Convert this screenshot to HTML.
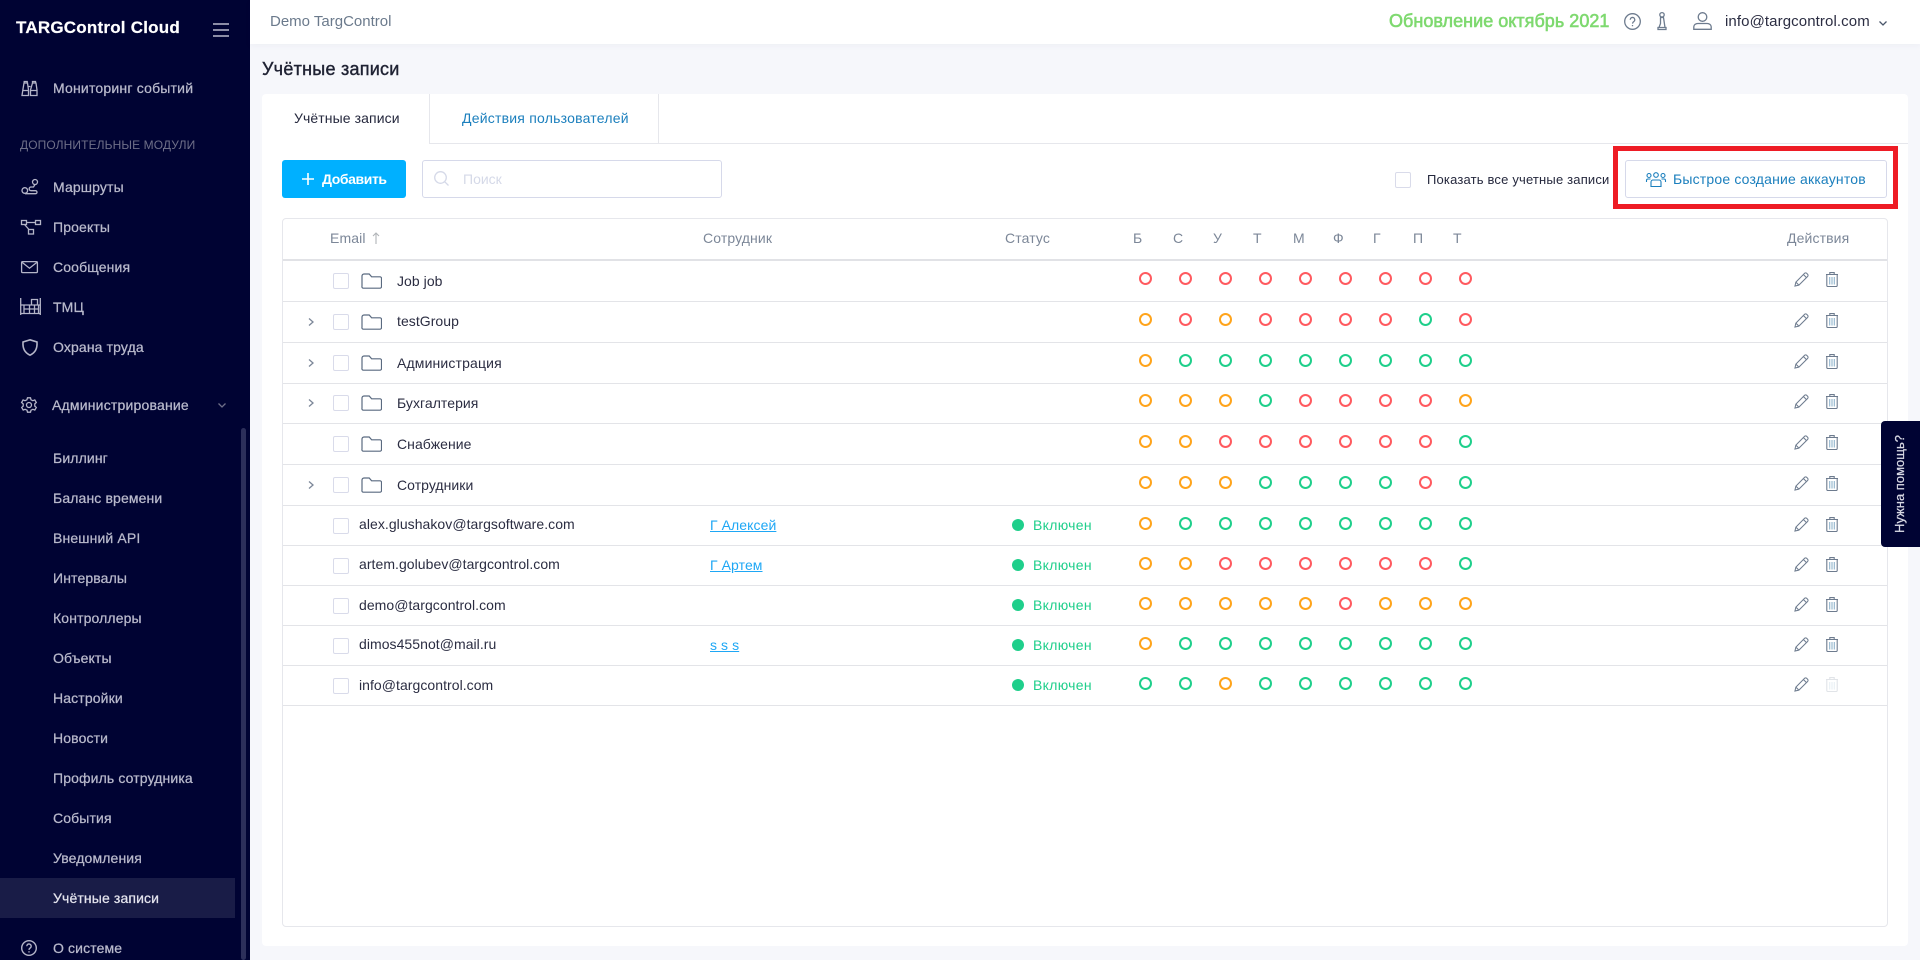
<!DOCTYPE html>
<html lang="ru"><head><meta charset="utf-8"><title>Учётные записи</title>
<style>
*{box-sizing:border-box}
html,body{margin:0;padding:0;width:1920px;height:960px;overflow:hidden;background:#f6f7fb;font-family:"Liberation Sans",sans-serif;font-size:14px;color:#25283d}
.a,.t,svg.i{position:absolute}
.t{white-space:nowrap;line-height:20px;height:20px}
#side{position:absolute;left:0;top:0;width:250px;height:960px;background:#000333;overflow:hidden}
#side .t{color:#b9bacc;left:53px;-webkit-text-stroke:.25px #b9bacc;letter-spacing:.13px}
svg.i{fill:none;stroke:#b4b5c8;stroke-width:1.3;overflow:visible}
#hdr{position:absolute;left:250px;top:0;width:1670px;height:44px;background:#fff;box-shadow:0 2px 6px rgba(40,50,90,.04)}
.card{position:absolute;left:262px;top:94px;width:1646px;height:852px;background:#fff;border-radius:4px}
.line{position:absolute;left:283px;width:1604px;height:1px;background:#e3e4e8}
.cb{position:absolute;left:333px;width:16px;height:16px;background:#fff;border:1px solid #d9dbea;border-radius:2px}
.h{color:#7c8798;letter-spacing:.12px}
.n{color:#2b2d42;letter-spacing:.05px}
.l{color:#1ea7f5;text-decoration:underline;letter-spacing:.08px}
.g{color:#1fcf8b;letter-spacing:.3px}
.dot{position:absolute;left:1012px;width:12px;height:12px;border-radius:50%;background:#1fcf8b}
circle.r,circle.o,circle.v{fill:none;stroke-width:2}
.r{stroke:#ff5a5f}.o{stroke:#ffa41b}.v{stroke:#1fcf8b}
</style></head><body>
<svg width="0" height="0" style="position:absolute"><defs>
<symbol id="fo" viewBox="0 0 21 16"><path d="M1 3a2 2 0 0 1 2-2h5.2l2.4 2.8H19a1.5 1.5 0 0 1 1.5 1.5v8.4a1.5 1.5 0 0 1-1.5 1.5H2.5A1.5 1.5 0 0 1 1 13.2z" fill="none" stroke="#5a6a80" stroke-width="1.2"/></symbol>
<symbol id="pe" viewBox="0 0 16 16"><path d="M1 15l1-4.2L11.200 1.500a1.700 1.700 0 0 1 2.400 0l.9.9a1.700 1.700 0 0 1 0 2.400L5.200 14z M2 10.800L5.200 14 M10 2.700l3.300 3.300" fill="none" stroke="#6d7b8e" stroke-width="1.100"/></symbol>
<symbol id="tr" viewBox="0 0 12 15"><path d="M0 2.500h12 M3.800 2.500V.6h4.400v1.900 M.8 2.500v11a1 1 0 0 0 1 1h8.400a1 1 0 0 0 1-1v-11" fill="none" stroke="#6d7b8e" stroke-width="1.100"/><path d="M3.700 5v7.500 M6 5v7.500 M8.300 5v7.500" fill="none" stroke="#8fb4cc" stroke-width="1.100"/></symbol>
<symbol id="chv" viewBox="0 0 8 10"><path d="M2 1.500L6 5 2 8.500" fill="none" stroke="#7c8798" stroke-width="1.300"/></symbol>
</defs></svg>

<div id="side">
<div class="t" style="left:16px;top:18px;color:#fff;font-weight:bold;font-size:17px;-webkit-text-stroke:.2px #fff;letter-spacing:.22px">TARGControl Cloud</div>
<svg class="i" style="left:213px;top:23px;stroke:#dfe0ea" width="16" height="14"><path d="M0 1h16M0 7h16M0 13h16"/></svg>

<svg class="i" style="left:21px;top:81px" width="17" height="15"><path d="M1 14.500h6.500V9L6.500 2H3L2 8zM9.500 14.500H16V9L15 2h-3.500l-2 7zM7.500 5.500h2M1.500 9.500h6M9.500 9.500h6.500M3.200 2V.5h3V2M11.500 2V.5h3V2"/></svg>
<div class="t" style="top:78px;letter-spacing:.2px">Мониторинг событий</div>
<div class="t" style="top:134.500px;font-size:12px;color:#6e6f88;-webkit-text-stroke:0;left:20px;letter-spacing:.1px">ДОПОЛНИТЕЛЬНЫЕ МОДУЛИ</div>

<svg class="i" style="left:21px;top:179px" width="17" height="16"><circle cx="3.800" cy="11.500" r="2.800"/><circle cx="14" cy="3" r="2.500"/><path d="M14 5.500l-1.500 2.500H10a1.800 1.800 0 0 0 0 3.700h4.500a1.500 1.500 0 0 1 0 3H4"/></svg>
<div class="t" style="top:177px">Маршруты</div>

<svg class="i" style="left:21px;top:220px" width="20" height="16"><rect x=".5" y=".5" width="5" height="4"/><rect x="14.500" y=".5" width="5" height="4"/><rect x="7.500" y="9.500" width="5" height="4.500"/><path d="M5.500 2.500H14.500M3.500 4.500L8 9.500"/></svg>
<div class="t" style="top:217px">Проекты</div>

<svg class="i" style="left:21px;top:261px" width="17" height="12"><rect x=".6" y=".6" width="15.800" height="11" rx="1"/><path d="M1 1.200l7.500 6 7.500-6"/></svg>
<div class="t" style="top:257px">Сообщения</div>

<svg class="i" style="left:20px;top:298px" width="21" height="17"><path d="M.7 0v17M20.300 0v17M.7 15.500h19.600M.7 7h19.600M4 7v8.500M9.500 7v8.500M14.500 7v8.500M18.500 7v8.500M11.500 7V1.500h6V7M4 11h14.500"/></svg>
<div class="t" style="top:297px">ТМЦ</div>

<svg class="i" style="left:22px;top:339px;stroke-width:1.600" width="16" height="17"><path d="M8 .8L15 3c.4 6.500-1.500 10.500-7 13.200C2.500 13.500.6 9.500 1 3z"/></svg>
<div class="t" style="top:337px">Охрана труда</div>

<svg class="i" style="left:21px;top:397px" width="16" height="16"><circle cx="8" cy="8" r="2.500"/><path d="M6.500 .8h3l.5 2 1.900.9 1.900-.8 1.500 2.600-1.500 1.400v2.200l1.500 1.400-1.500 2.600-1.900-.8-1.900.9-.5 2h-3l-.5-2-1.900-.9-1.900.8-1.500-2.600 1.500-1.400V6.900L.6 5.500l1.500-2.600 1.900.8 1.900-.9z"/></svg>
<div class="t" style="left:52px;top:395px;letter-spacing:.2px">Администрирование</div>
<svg class="i" style="left:218px;top:403px;stroke:#6e6f88" width="8" height="5"><path d="M.5.5L4 4 7.500.5"/></svg>

<div class="a" style="left:0;top:878px;width:235px;height:40px;background:#191c47"></div>
<div class="a" style="left:241px;top:428px;width:5px;height:532px;background:#2c2f5a;border-radius:3px"></div>
<div class="t" style="top:448px">Биллинг</div>
<div class="t" style="top:488px">Баланс времени</div>
<div class="t" style="top:528px">Внешний API</div>
<div class="t" style="top:568px">Интервалы</div>
<div class="t" style="top:608px">Контроллеры</div>
<div class="t" style="top:648px">Объекты</div>
<div class="t" style="top:688px">Настройки</div>
<div class="t" style="top:728px">Новости</div>
<div class="t" style="top:768px">Профиль сотрудника</div>
<div class="t" style="top:808px">События</div>
<div class="t" style="top:848px">Уведомления</div>
<div class="t" style="top:888px;color:#e4e4ee;-webkit-text-stroke:.25px #e4e4ee">Учётные записи</div>
<svg class="i" style="left:21px;top:940px;stroke-width:1.400" width="16" height="16"><circle cx="8" cy="8" r="7.300"/><path d="M5.800 6.200a2.200 2.200 0 1 1 3.400 1.800c-.8.500-1.200 1-1.200 1.900M8 11.300v1.200"/></svg>
<div class="t" style="top:938px">О системе</div>
</div>

<div id="hdr"></div>
<div class="t" style="left:270px;top:12px;color:#6b7a8c;font-size:15px">Demo TargControl</div>
<div class="t" style="left:1389px;top:11px;color:#7ed96f;font-size:18px;-webkit-text-stroke:.6px #7ed96f;letter-spacing:.03px">Обновление октябрь 2021</div>
<svg class="i" style="left:1624px;top:13px;stroke:#6d7b8e;stroke-width:1.300" width="17" height="17"><circle cx="8.500" cy="8.500" r="7.800"/><path d="M6.200 6.700a2.300 2.300 0 1 1 3.500 2c-.8.500-1.200 1-1.200 1.900M8.500 12v1.200"/></svg>
<svg class="i" style="left:1657px;top:12px;stroke:#6d7b8e;stroke-width:1.300" width="10" height="18"><circle cx="5" cy="2.800" r="2.200"/><path d="M3 5.500h4M3.500 5.500v6L2 15.500h6L6.500 5.500M1 17.500h8v-2H1z"/></svg>
<svg class="i" style="left:1693px;top:12px;stroke:#6d7b8e;stroke-width:1.300" width="19" height="18"><circle cx="9.500" cy="5" r="4.300"/><path d="M.8 17.300v-2.500c0-2 2-3.300 4-3.300h9.400c2 0 4 1.300 4 3.300v2.500z"/></svg>
<div class="t" style="left:1725px;top:12px;color:#2b2d42;font-size:15px;letter-spacing:.1px">info@targcontrol.com</div>
<svg class="i" style="left:1879px;top:21px;stroke:#4a566a" width="8" height="5"><path d="M.5.5L4 4 7.500.5"/></svg>

<div class="t" style="left:262px;top:59px;font-size:18px;color:#1f2233;-webkit-text-stroke:.4px #1f2233;letter-spacing:.25px">Учётные записи</div>

<div class="card"></div>
<div class="a" style="left:429px;top:94px;width:1px;height:50px;background:#e6e7ec"></div>
<div class="a" style="left:658px;top:94px;width:1px;height:50px;background:#e6e7ec"></div>
<div class="a" style="left:429px;top:143px;width:1479px;height:1px;background:#e6e7ec"></div>
<div class="t" style="left:294px;top:108px;color:#25283d;letter-spacing:.1px">Учётные записи</div>
<div class="t" style="left:462px;top:108px;color:#1b7fbd;letter-spacing:.22px">Действия пользователей</div>

<div class="a" style="left:282px;top:160px;width:124px;height:38px;background:#00b0ff;border-radius:3px"></div>
<svg class="i" style="left:302px;top:173px;stroke:#fff;stroke-width:1.600" width="12" height="12"><path d="M6 0v12M0 6h12"/></svg>
<div class="t" style="left:322px;top:169px;color:#fff;font-weight:bold;letter-spacing:-.4px">Добавить</div>

<div class="a" style="left:422px;top:160px;width:300px;height:38px;background:#fff;border:1px solid #d6d9ea;border-radius:3px"></div>
<svg class="i" style="left:434px;top:171px;stroke:#d5d9e8;stroke-width:1.300" width="15" height="15"><circle cx="6.500" cy="6.500" r="5.800"/><path d="M10.800 10.800L14.500 14.500"/></svg>
<div class="t" style="left:463px;top:169px;color:#d5d9e8">Поиск</div>

<div class="a" style="left:1395px;top:172px;width:16px;height:16px;background:#fff;border:1px solid #d9dbea;border-radius:2px"></div>
<div class="t" style="left:1427px;top:170px;font-size:13px;color:#25283d;letter-spacing:.18px">Показать все учетные записи</div>

<div class="a" style="left:1612.500px;top:146px;width:285px;height:63px;border:5px solid #ee1c25"></div>
<div class="a" style="left:1625px;top:160px;width:262px;height:38px;background:#fff;border:1px solid #d6d9ea;border-radius:3px"></div>
<svg class="i" style="left:1646px;top:172px;stroke:#1b7fbd;stroke-width:1.100" width="20" height="15"><circle cx="10" cy="3" r="2.300"/><circle cx="3" cy="3.500" r="2"/><circle cx="17" cy="3.500" r="2"/><path d="M5 14.500V10a2 2 0 0 1 2-2h6a2 2 0 0 1 2 2v4.500zM.5 10V8.500a1.500 1.500 0 0 1 1.500-1.500h2.500M19.500 10V8.500A1.500 1.500 0 0 0 18 7h-2.500"/></svg>
<div class="t" style="left:1673px;top:169px;color:#1b7fbd;letter-spacing:.18px">Быстрое создание аккаунтов</div>

<div class="a" style="left:282px;top:218px;width:1606px;height:709px;background:#fff;border:1px solid #e6e7ec;border-radius:4px"></div>
<div class="a" style="left:283px;top:259px;width:1604px;height:2px;background:#e1e2e6"></div>
<div class="line" style="top:301px"></div><div class="line" style="top:342px"></div><div class="line" style="top:383px"></div><div class="line" style="top:423px"></div><div class="line" style="top:464px"></div><div class="line" style="top:505px"></div><div class="line" style="top:545px"></div><div class="line" style="top:585px"></div><div class="line" style="top:625px"></div><div class="line" style="top:665px"></div><div class="line" style="top:705px"></div>

<div class="t h" style="left:330px;top:228px">Email</div>
<svg class="i" style="left:372px;top:232px;stroke:#b1b4b8;stroke-width:1.100" width="8" height="12"><path d="M4 12V1M1 4l3-3 3 3"/></svg>
<div class="t h" style="left:703px;top:228px">Сотрудник</div>
<div class="t h" style="left:1005px;top:228px">Статус</div>
<div class="t h" style="left:1133px;top:228px">Б</div><div class="t h" style="left:1173px;top:228px">С</div><div class="t h" style="left:1213px;top:228px">У</div><div class="t h" style="left:1253px;top:228px">Т</div><div class="t h" style="left:1293px;top:228px">М</div><div class="t h" style="left:1333px;top:228px">Ф</div><div class="t h" style="left:1373px;top:228px">Г</div><div class="t h" style="left:1413px;top:228px">П</div><div class="t h" style="left:1453px;top:228px">Т</div>
<div class="t h" style="left:1787px;top:228px">Действия</div>

<div class="cb" style="top:273px"></div><div class="cb" style="top:314px"></div><div class="cb" style="top:355px"></div><div class="cb" style="top:395px"></div><div class="cb" style="top:436px"></div><div class="cb" style="top:477px"></div><div class="cb" style="top:518px"></div><div class="cb" style="top:558px"></div><div class="cb" style="top:598px"></div><div class="cb" style="top:638px"></div><div class="cb" style="top:678px"></div>

<svg class="i" style="left:307px;top:317px" width="8" height="10"><use href="#chv"/></svg>
<svg class="i" style="left:307px;top:358px" width="8" height="10"><use href="#chv"/></svg>
<svg class="i" style="left:307px;top:398px" width="8" height="10"><use href="#chv"/></svg>
<svg class="i" style="left:307px;top:480px" width="8" height="10"><use href="#chv"/></svg>

<svg class="i" style="left:361px;top:273px" width="21" height="16"><use href="#fo"/></svg>
<svg class="i" style="left:361px;top:314px" width="21" height="16"><use href="#fo"/></svg>
<svg class="i" style="left:361px;top:355px" width="21" height="16"><use href="#fo"/></svg>
<svg class="i" style="left:361px;top:395px" width="21" height="16"><use href="#fo"/></svg>
<svg class="i" style="left:361px;top:436px" width="21" height="16"><use href="#fo"/></svg>
<svg class="i" style="left:361px;top:477px" width="21" height="16"><use href="#fo"/></svg>

<div class="t n" style="left:397px;top:271px">Job job</div>
<div class="t n" style="left:397px;top:311px">testGroup</div>
<div class="t n" style="left:397px;top:353px;letter-spacing:.15px">Администрация</div>
<div class="t n" style="left:397px;top:393px">Бухгалтерия</div>
<div class="t n" style="left:397px;top:434px">Снабжение</div>
<div class="t n" style="left:397px;top:475px">Сотрудники</div>
<div class="t n" style="left:359px;top:514px">alex.glushakov@targsoftware.com</div>
<div class="t n" style="left:359px;top:554px">artem.golubev@targcontrol.com</div>
<div class="t n" style="left:359px;top:595px">demo@targcontrol.com</div>
<div class="t n" style="left:359px;top:634px">dimos455not@mail.ru</div>
<div class="t n" style="left:359px;top:675px">info@targcontrol.com</div>

<div class="t l" style="left:710px;top:515px">Г Алексей</div>
<div class="t l" style="left:710px;top:555px">Г Артем</div>
<div class="t l" style="left:710px;top:635px">s s s</div>

<div class="dot" style="top:519px"></div><div class="t g" style="left:1033px;top:515px">Включен</div>
<div class="dot" style="top:559px"></div><div class="t g" style="left:1033px;top:555px">Включен</div>
<div class="dot" style="top:599px"></div><div class="t g" style="left:1033px;top:595px">Включен</div>
<div class="dot" style="top:639px"></div><div class="t g" style="left:1033px;top:635px">Включен</div>
<div class="dot" style="top:679px"></div><div class="t g" style="left:1033px;top:675px">Включен</div>

<svg class="a" style="left:0;top:0" width="1920" height="960" viewBox="0 0 1920 960">
<defs><style>circle.r,circle.o,circle.v{r:5.500px}</style></defs>
<g id="statuses">
<g transform="translate(0 278.500)"><circle class="r" cx="1145.500" cy="0"/><circle class="r" cx="1185.500" cy="0"/><circle class="r" cx="1225.500" cy="0"/><circle class="r" cx="1265.500" cy="0"/><circle class="r" cx="1305.500" cy="0"/><circle class="r" cx="1345.500" cy="0"/><circle class="r" cx="1385.500" cy="0"/><circle class="r" cx="1425.500" cy="0"/><circle class="r" cx="1465.500" cy="0"/></g>
<g transform="translate(0 319.500)"><circle class="o" cx="1145.500" cy="0"/><circle class="r" cx="1185.500" cy="0"/><circle class="o" cx="1225.500" cy="0"/><circle class="r" cx="1265.500" cy="0"/><circle class="r" cx="1305.500" cy="0"/><circle class="r" cx="1345.500" cy="0"/><circle class="r" cx="1385.500" cy="0"/><circle class="v" cx="1425.500" cy="0"/><circle class="r" cx="1465.500" cy="0"/></g>
<g transform="translate(0 360.500)"><circle class="o" cx="1145.500" cy="0"/><circle class="v" cx="1185.500" cy="0"/><circle class="v" cx="1225.500" cy="0"/><circle class="v" cx="1265.500" cy="0"/><circle class="v" cx="1305.500" cy="0"/><circle class="v" cx="1345.500" cy="0"/><circle class="v" cx="1385.500" cy="0"/><circle class="v" cx="1425.500" cy="0"/><circle class="v" cx="1465.500" cy="0"/></g>
<g transform="translate(0 400.500)"><circle class="o" cx="1145.500" cy="0"/><circle class="o" cx="1185.500" cy="0"/><circle class="o" cx="1225.500" cy="0"/><circle class="v" cx="1265.500" cy="0"/><circle class="r" cx="1305.500" cy="0"/><circle class="r" cx="1345.500" cy="0"/><circle class="r" cx="1385.500" cy="0"/><circle class="r" cx="1425.500" cy="0"/><circle class="o" cx="1465.500" cy="0"/></g>
<g transform="translate(0 441.500)"><circle class="o" cx="1145.500" cy="0"/><circle class="o" cx="1185.500" cy="0"/><circle class="r" cx="1225.500" cy="0"/><circle class="r" cx="1265.500" cy="0"/><circle class="r" cx="1305.500" cy="0"/><circle class="r" cx="1345.500" cy="0"/><circle class="r" cx="1385.500" cy="0"/><circle class="r" cx="1425.500" cy="0"/><circle class="v" cx="1465.500" cy="0"/></g>
<g transform="translate(0 482.500)"><circle class="o" cx="1145.500" cy="0"/><circle class="o" cx="1185.500" cy="0"/><circle class="o" cx="1225.500" cy="0"/><circle class="v" cx="1265.500" cy="0"/><circle class="v" cx="1305.500" cy="0"/><circle class="v" cx="1345.500" cy="0"/><circle class="v" cx="1385.500" cy="0"/><circle class="r" cx="1425.500" cy="0"/><circle class="v" cx="1465.500" cy="0"/></g>
<g transform="translate(0 523.500)"><circle class="o" cx="1145.500" cy="0"/><circle class="v" cx="1185.500" cy="0"/><circle class="v" cx="1225.500" cy="0"/><circle class="v" cx="1265.500" cy="0"/><circle class="v" cx="1305.500" cy="0"/><circle class="v" cx="1345.500" cy="0"/><circle class="v" cx="1385.500" cy="0"/><circle class="v" cx="1425.500" cy="0"/><circle class="v" cx="1465.500" cy="0"/></g>
<g transform="translate(0 563.500)"><circle class="o" cx="1145.500" cy="0"/><circle class="o" cx="1185.500" cy="0"/><circle class="r" cx="1225.500" cy="0"/><circle class="r" cx="1265.500" cy="0"/><circle class="r" cx="1305.500" cy="0"/><circle class="r" cx="1345.500" cy="0"/><circle class="r" cx="1385.500" cy="0"/><circle class="r" cx="1425.500" cy="0"/><circle class="v" cx="1465.500" cy="0"/></g>
<g transform="translate(0 603.500)"><circle class="o" cx="1145.500" cy="0"/><circle class="o" cx="1185.500" cy="0"/><circle class="o" cx="1225.500" cy="0"/><circle class="o" cx="1265.500" cy="0"/><circle class="o" cx="1305.500" cy="0"/><circle class="r" cx="1345.500" cy="0"/><circle class="o" cx="1385.500" cy="0"/><circle class="o" cx="1425.500" cy="0"/><circle class="o" cx="1465.500" cy="0"/></g>
<g transform="translate(0 643.500)"><circle class="o" cx="1145.500" cy="0"/><circle class="v" cx="1185.500" cy="0"/><circle class="v" cx="1225.500" cy="0"/><circle class="v" cx="1265.500" cy="0"/><circle class="v" cx="1305.500" cy="0"/><circle class="v" cx="1345.500" cy="0"/><circle class="v" cx="1385.500" cy="0"/><circle class="v" cx="1425.500" cy="0"/><circle class="v" cx="1465.500" cy="0"/></g>
<g transform="translate(0 683.500)"><circle class="v" cx="1145.500" cy="0"/><circle class="v" cx="1185.500" cy="0"/><circle class="o" cx="1225.500" cy="0"/><circle class="v" cx="1265.500" cy="0"/><circle class="v" cx="1305.500" cy="0"/><circle class="v" cx="1345.500" cy="0"/><circle class="v" cx="1385.500" cy="0"/><circle class="v" cx="1425.500" cy="0"/><circle class="v" cx="1465.500" cy="0"/></g>
</g>
<g id="actions">
<use href="#pe" x="1794" y="272" width="15" height="15"/><use href="#tr" x="1826" y="272" width="12" height="15"/>
<use href="#pe" x="1794" y="313" width="15" height="15"/><use href="#tr" x="1826" y="313" width="12" height="15"/>
<use href="#pe" x="1794" y="354" width="15" height="15"/><use href="#tr" x="1826" y="354" width="12" height="15"/>
<use href="#pe" x="1794" y="394" width="15" height="15"/><use href="#tr" x="1826" y="394" width="12" height="15"/>
<use href="#pe" x="1794" y="435" width="15" height="15"/><use href="#tr" x="1826" y="435" width="12" height="15"/>
<use href="#pe" x="1794" y="476" width="15" height="15"/><use href="#tr" x="1826" y="476" width="12" height="15"/>
<use href="#pe" x="1794" y="517" width="15" height="15"/><use href="#tr" x="1826" y="517" width="12" height="15"/>
<use href="#pe" x="1794" y="557" width="15" height="15"/><use href="#tr" x="1826" y="557" width="12" height="15"/>
<use href="#pe" x="1794" y="597" width="15" height="15"/><use href="#tr" x="1826" y="597" width="12" height="15"/>
<use href="#pe" x="1794" y="637" width="15" height="15"/><use href="#tr" x="1826" y="637" width="12" height="15"/>
<use href="#pe" x="1794" y="677" width="15" height="15"/><use href="#tr" x="1826" y="677" width="12" height="15" opacity=".2"/>
</g>
</svg>

<div class="a" style="left:1881px;top:421px;width:39px;height:126px;background:#000333;border-radius:4px 0 0 4px"></div>
<div class="t" style="left:1900px;top:484px;color:#d8d9e4;font-size:13px;transform:translate(-50%,-50%) rotate(-90deg);-webkit-text-stroke:.25px #d8d9e4">Нужна помощь?</div>
</body></html>
